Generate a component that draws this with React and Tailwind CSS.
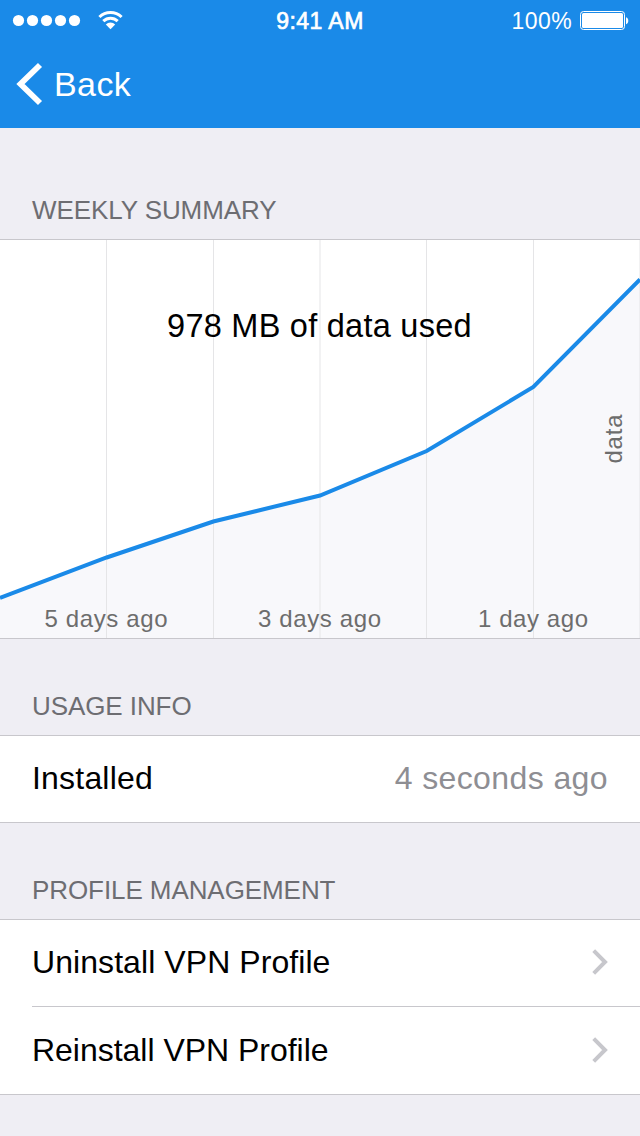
import React from 'react';

const usage = [
  { x: 0, y: 358 },
  { x: 106.67, y: 317.5 },
  { x: 213.33, y: 281.5 },
  { x: 320, y: 255.5 },
  { x: 426.67, y: 211 },
  { x: 533.33, y: 147 },
  { x: 640, y: 39.5 },
];

const gridLines = [106, 213, 319.5, 426, 533, 639.5];

const StatusBar = () => (
  <div className="h-10 flex items-center">
    <div className="w-[213px] flex items-center">
      <svg width="125" height="40" viewBox="0 0 125 40" fill="white">
        <circle cx="18.5" cy="20.5" r="5.6" />
        <circle cx="32.5" cy="20.5" r="5.6" />
        <circle cx="46.5" cy="20.5" r="5.6" />
        <circle cx="60.5" cy="20.5" r="5.6" />
        <circle cx="74.5" cy="20.5" r="5.6" />
        <g fill="none" stroke="white" strokeWidth="3">
          <path d="M99.4 17a15.7 15.7 0 0 1 22.2 0" />
          <path d="M103.3 21.1a10.3 10.3 0 0 1 14.4 0" />
        </g>
        <path d="M105.8 24.5a6.7 6.7 0 0 1 9.4 0L110.5 29.2z" />
      </svg>
    </div>
    <div className="w-[214px] text-center text-white text-[23px] leading-10 tracking-[0.45px] [-webkit-text-stroke:0.7px_white] pt-[2px]">
      9:41 AM
    </div>
    <div className="w-[213px] flex items-center justify-end">
      <span className="text-white text-[23px] leading-10 tracking-[0.4px] pt-[2px] mr-[7px]">100%</span>
      <svg width="61" height="40" viewBox="0 0 61 40">
        <rect x="1.5" y="11.5" width="44" height="18" rx="3" fill="none" stroke="white" />
        <rect x="3" y="13" width="41" height="15" rx="1.5" fill="white" />
        <path d="M47 17.2c3 .8 3 6.2 0 7z" fill="white" />
      </svg>
    </div>
  </div>
);

const NavBar = () => (
  <div className="h-[88px] flex items-center">
    <svg width="54" height="88" viewBox="0 0 54 88">
      <path d="M40 25L20.5 44L40 63" fill="none" stroke="white" strokeWidth="5.8" />
    </svg>
    <span className="text-white text-[34px] leading-[88px] tracking-[0.4px]">Back</span>
  </div>
);

const SectionHeader = ({ title, className }) => (
  <div className={`flex items-end px-8 pb-[14px] border-b border-[#c8c7cc] ${className}`}>
    <h2 className="text-[26px] leading-[30px] tracking-[-0.08px] text-[#6d6d72]">{title}</h2>
  </div>
);

const UsageChart = () => {
  const line = usage.map(p => `${p.x},${p.y}`).join(' ');

  return (
    <svg width="640" height="398" viewBox="0 0 640 398" className="block bg-white">
      <polygon points={`${line} 640,398 0,398`} fill="#f8f8fb" />
      {gridLines.map(x => (
        <rect key={x} x={x} y="0" width="1" height="398" fill="#e5e5e7" />
      ))}
      <polyline points={line} fill="none" stroke="#1a8ae8" strokeWidth="4" />
      <text x="319.3" y="96.5" fontSize="32.5" textAnchor="middle" textLength="304.5">978 MB of data used</text>
      <g fontSize="24" fill="#6d6d6d" textAnchor="middle">
        <text x="106" y="387" textLength="123">5 days ago</text>
        <text x="319.5" y="387" textLength="123">3 days ago</text>
        <text x="533" y="387" textLength="110">1 day ago</text>
        <text transform="translate(622 199) rotate(-90)" textLength="49">data</text>
      </g>
    </svg>
  );
};

const Row = ({ label, value, className, labelClass }) => (
  <div className={`ml-8 pr-8 pb-[2px] flex items-center justify-between text-[32px] ${className}`}>
    <span className={labelClass}>{label}</span>
    {value ? (
      <span className="text-[#8e8e93] tracking-[0.4px]">{value}</span>
    ) : (
      <svg width="17" height="28" viewBox="0 0 17 28">
        <path d="M2.7 2.7L14 14L2.7 25.3" fill="none" stroke="#c7c7cc" strokeWidth="4" />
      </svg>
    )}
  </div>
);

const App = () => {
  return (
    <div className="w-[640px] h-[1136px] bg-[#efeef4] font-['Liberation_Sans',Arial,sans-serif] overflow-hidden">
      <header className="bg-[#1a8ae8]">
        <StatusBar />
        <NavBar />
      </header>

      {/* Weekly data usage */}
      <SectionHeader title="WEEKLY SUMMARY" className="h-28" />
      <div className="border-b border-[#c8c7cc]">
        <UsageChart />
      </div>

      <SectionHeader title="USAGE INFO" className="h-[97px]" />
      <div className="bg-white border-b border-[#c8c7cc]">
        <Row label="Installed" value="4 seconds ago" className="h-[86px]" labelClass="tracking-[0.2px]" />
      </div>

      <SectionHeader title="PROFILE MANAGEMENT" className="h-[97px]" />
      <div className="bg-white border-b border-[#c8c7cc]">
        <Row label="Uninstall VPN Profile" className="h-[87px] border-b border-[#c8c7cc]" labelClass="tracking-[0.07px]" />
        <Row label="Reinstall VPN Profile" className="h-[87px]" labelClass="tracking-[-0.02px]" />
      </div>
    </div>
  );
};

export default App;
